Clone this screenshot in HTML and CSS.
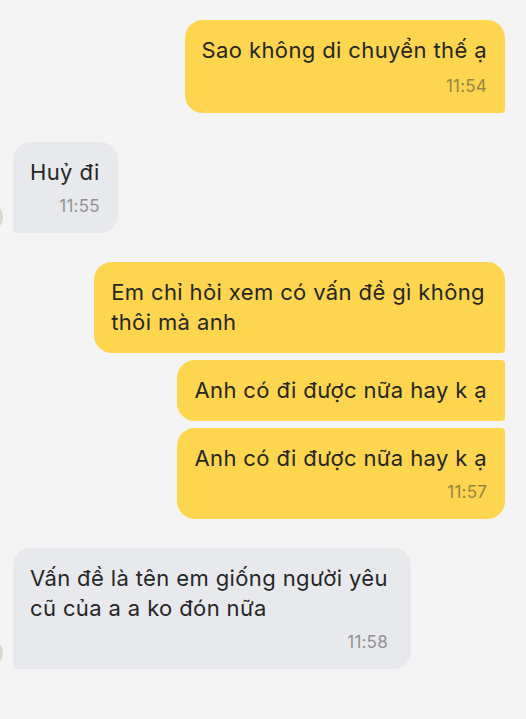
FILE: index.html
```html
<!DOCTYPE html>
<html lang="vi">
<head>
<meta charset="utf-8">
<title>Chat</title>
<link rel="stylesheet" href="styles.css">
</head>
<body>
<main class="chat">
  <section class="group out">
    <div class="bubble out r-last">
      <p class="text">Sao không di chuyển thế ạ</p>
      <span class="time">11:54</span>
    </div>
  </section>

  <section class="group in">
    <div class="row-in">
      <span class="avatar"></span>
      <div class="bubble in l-last">
        <p class="text">Huỷ đi</p>
        <span class="time">11:55</span>
      </div>
    </div>
  </section>

  <section class="group out">
    <div class="bubble out r-first wide">
      <p class="text">Em chỉ hỏi xem có vấn đề gì không<br>thôi mà anh</p>
    </div>
    <div class="bubble out r-mid">
      <p class="text">Anh có đi được nữa hay k ạ</p>
    </div>
    <div class="bubble out r-end">
      <p class="text">Anh có đi được nữa hay k ạ</p>
      <span class="time">11:57</span>
    </div>
  </section>

  <section class="group in">
    <div class="row-in">
      <span class="avatar"></span>
      <div class="bubble in l-last wide-in">
        <p class="text">Vấn đề là tên em giống người yêu<br>cũ của a a ko đón nữa</p>
        <span class="time">11:58</span>
      </div>
    </div>
  </section>
</main>
</body>
</html>
```

FILE: styles.css
```css
* { box-sizing: border-box; }

html, body {
  margin: 0;
  padding: 0;
  background: #f4f4f4;
}

body {
  width: 526px;
  height: 719px;
  overflow: hidden;
  font-family: Inter, "Noto Sans", "Liberation Sans", sans-serif;
  color: #262626;
}

.chat {
  display: flex;
  flex-direction: column;
  gap: 29px;
  padding: 20px 21px 0 13px;
}

.group {
  display: flex;
  flex-direction: column;
  gap: 7px;
}

.group.out { align-items: flex-end; }
.group.in { align-items: flex-start; }

.row-in {
  display: flex;
  align-items: flex-end;
}

.avatar {
  width: 30px;
  height: 30px;
  border-radius: 50%;
  background: #d9d8cc;
  margin-left: -40px;
  margin-right: 10px;
  margin-bottom: 1px;
  flex: none;
}

.bubble {
  display: flex;
  flex-direction: column;
  padding: 15px 18px 16px 17px;
  border-radius: 18px;
}

.bubble.out { background: #fdd54f; }
.bubble.in { background: #e8e9ec; }

.bubble.wide { padding-right: 20px; }
.bubble.wide-in { padding-right: 23px; }

.r-last { border-bottom-right-radius: 4px; }
.r-first { border-bottom-right-radius: 4px; }
.r-mid { border-top-right-radius: 4px; border-bottom-right-radius: 4px; }
.r-end { border-top-right-radius: 4px; }
.l-last { border-bottom-left-radius: 4px; }

.text {
  margin: 0;
  font-size: 22px;
  line-height: 30px;
  letter-spacing: 0.38px;
}

.time {
  align-self: flex-end;
  margin-top: 8px;
  font-size: 17px;
  line-height: 22px;
  letter-spacing: 0.2px;
}

.r-last .time { margin-top: 10px; }

.bubble.out .time { color: #948646; }
.bubble.in .time { color: #8f9296; }
```
